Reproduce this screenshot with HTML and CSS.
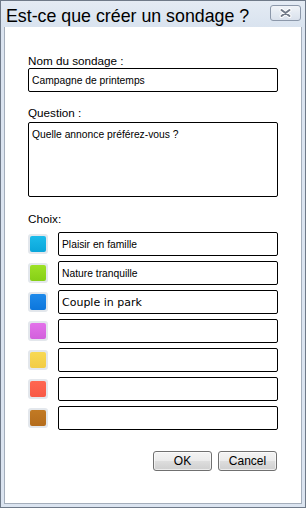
FILE: index.html
```html
<!DOCTYPE html>
<html lang="fr">
<head>
<meta charset="utf-8">
<title>Est-ce que créer un sondage ?</title>
<link rel="stylesheet" href="styles.css">
</head>
<body>
<div class="window">
  <div class="titlebar">
    <span class="title">Est-ce que créer un sondage ?</span>
    <button class="close" aria-label="Fermer">
      <svg width="31" height="16" viewBox="0 0 31 16">
        <defs>
          <linearGradient id="cg" x1="0" y1="0" x2="0" y2="1">
            <stop offset="0" stop-color="#f1f4f8"/>
            <stop offset="0.5" stop-color="#e4eaf2"/>
            <stop offset="1" stop-color="#d8e0eb"/>
          </linearGradient>
        </defs>
        <rect x="0.5" y="0.5" width="30" height="15" rx="2.5" fill="url(#cg)" stroke="#8c98aa"/>
        <path d="M11.5 5 L19.5 11 M19.5 5 L11.5 11" stroke="#ffffff" stroke-width="4" stroke-linecap="round"/>
        <path d="M11.5 5 L19.5 11 M19.5 5 L11.5 11" stroke="#707987" stroke-width="2" stroke-linecap="round"/>
      </svg>
    </button>
  </div>
  <div class="client">
    <label class="field-label" for="nom">Nom du sondage :</label>
    <input class="text-box" id="nom" type="text" value="Campagne de printemps">

    <label class="field-label field-label--spaced" for="question">Question :</label>
    <textarea class="text-area" id="question">Quelle annonce préférez-vous ?</textarea>

    <div class="field-label field-label--choices">Choix:</div>
    <div class="choices">
      <div class="choice">
        <span class="swatch"><span class="swatch-color swatch-cyan"></span></span>
        <input class="text-box choice-box" type="text" value="Plaisir en famille">
      </div>
      <div class="choice">
        <span class="swatch"><span class="swatch-color swatch-green"></span></span>
        <input class="text-box choice-box" type="text" value="Nature tranquille">
      </div>
      <div class="choice">
        <span class="swatch"><span class="swatch-color swatch-blue"></span></span>
        <input class="text-box choice-box choice-box--wide" type="text" value="Couple in park">
      </div>
      <div class="choice">
        <span class="swatch"><span class="swatch-color swatch-magenta"></span></span>
        <input class="text-box choice-box" type="text" value="">
      </div>
      <div class="choice">
        <span class="swatch"><span class="swatch-color swatch-yellow"></span></span>
        <input class="text-box choice-box" type="text" value="">
      </div>
      <div class="choice">
        <span class="swatch"><span class="swatch-color swatch-red"></span></span>
        <input class="text-box choice-box" type="text" value="">
      </div>
      <div class="choice">
        <span class="swatch"><span class="swatch-color swatch-brown"></span></span>
        <input class="text-box choice-box" type="text" value="">
      </div>
    </div>

    <div class="buttons">
      <button class="btn">OK</button>
      <button class="btn">Cancel</button>
    </div>
  </div>
</div>
</body>
</html>
```

FILE: styles.css
```css
* {
  box-sizing: border-box;
}

html, body {
  margin: 0;
  padding: 0;
  background: #ffffff;
}

body {
  width: 306px;
  height: 508px;
  font-family: "Liberation Sans", Arial, sans-serif;
  color: #000000;
}

.window {
  width: 306px;
  height: 508px;
  border: 1px solid #6f7a89;
  background: #dbe4f0;
  padding: 0 3px 3px 3px;
  display: flex;
  flex-direction: column;
}

.titlebar {
  height: 26px;
  display: flex;
  justify-content: space-between;
  align-items: flex-start;
  background: linear-gradient(#e4ebf4, #d9e3ef);
  margin: 0 -3px;
  padding: 4px 4px 0 5px;
}

.title {
  font-size: 17.8px;
  line-height: 20px;
  padding-top: 1px;
  white-space: nowrap;
}

.close {
  margin: 0;
  padding: 0;
  border: none;
  background: none;
  width: 31px;
  height: 16px;
  display: block;
}

.close svg {
  display: block;
}

.client {
  flex: 1;
  background: #ffffff;
  border: 1px solid #a4aebb;
  border-top: none;
  padding: 27px 23px 0 23px;
  display: flex;
  flex-direction: column;
}

.field-label {
  display: block;
  font-size: 11.7px;
  line-height: 14px;
  height: 14px;
}

.field-label--spaced {
  margin-top: 14px;
  margin-bottom: 2px;
}

.field-label--choices {
  margin-top: 15px;
  margin-bottom: 6px;
}

.text-box {
  display: block;
  width: 100%;
  height: 24px;
  margin: 0;
  border: 1px solid #000000;
  border-radius: 2px;
  padding: 0 3px;
  font-family: "Liberation Sans", Arial, sans-serif;
  font-size: 10.3px;
  color: #000000;
  background: #ffffff;
  outline: none;
}

.text-area {
  display: block;
  width: 100%;
  height: 75px;
  margin: 0;
  border: 1px solid #000000;
  border-radius: 2px;
  padding: 6px 3px;
  font-family: "Liberation Sans", Arial, sans-serif;
  font-size: 10.3px;
  line-height: 12px;
  color: #000000;
  resize: none;
  overflow: hidden;
  outline: none;
}

.choices {
  display: flex;
  flex-direction: column;
  gap: 5px;
}

.choice {
  display: flex;
  align-items: center;
  gap: 10px;
  height: 24px;
}

.swatch {
  flex: none;
  width: 20px;
  height: 20px;
  border-radius: 3px;
  background: #e3e7ec;
  padding: 2px;
  display: block;
}

.swatch-color {
  display: block;
  width: 16px;
  height: 16px;
  border-radius: 2px;
}

.swatch-cyan { background: linear-gradient(#1cbbea, #0aa6da); }
.swatch-green { background: linear-gradient(#9de126, #86cf16); }
.swatch-blue { background: linear-gradient(#1e8aea, #0c76dc); }
.swatch-magenta { background: linear-gradient(#e372ea, #d260dc); }
.swatch-yellow { background: linear-gradient(#f8d954, #f2cc44); }
.swatch-red { background: linear-gradient(#ff6752, #f85946); }
.swatch-brown { background: linear-gradient(#c27a24, #b46c1c); }

.choice-box {
  flex: 1;
  width: auto;
}

.choice-box--wide {
  font-family: "DejaVu Sans", Verdana, sans-serif;
  font-size: 11px;
}

.buttons {
  display: flex;
  justify-content: flex-end;
  gap: 6px;
  margin-top: 21px;
  padding-right: 1px;
}

.btn {
  width: 59px;
  height: 20px;
  margin: 0;
  padding: 0;
  border: 1px solid #707070;
  border-radius: 3px;
  background: linear-gradient(#f4f4f4 0%, #ebebeb 48%, #dddddd 52%, #cfcfcf 100%);
  font-family: "Liberation Sans", Arial, sans-serif;
  font-size: 12px;
  color: #000000;
  box-shadow: inset 0 0 0 1px rgba(255, 255, 255, 0.6);
}
```
